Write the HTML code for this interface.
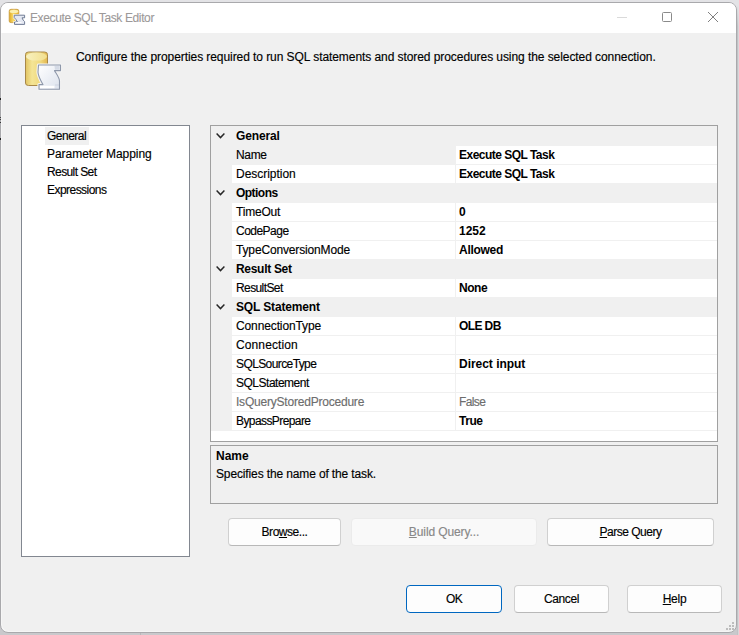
<!DOCTYPE html>
<html><head><meta charset="utf-8">
<style>
*{box-sizing:border-box;margin:0;padding:0}
html,body{width:739px;height:635px;overflow:hidden;background:#c9c9cc;font-family:"Liberation Sans",sans-serif;font-size:12px;color:#000;position:relative}
.abs{position:absolute}
#win{position:absolute;left:0;top:2px;width:737px;height:631px;border:1px solid #a9a9ac;border-radius:8px;background:#f0f0f0;box-shadow:inset 1px -1px 0 #f6f6f6}
#titlebar{position:absolute;left:1px;top:3px;width:735px;height:30px;background:#fff;border-radius:7px 7px 0 0}
.t{position:absolute;white-space:nowrap;line-height:18px;height:18px;-webkit-text-stroke:0.15px currentColor}
.b{font-weight:bold;-webkit-text-stroke:0}
#left{position:absolute;left:21px;top:125px;width:169px;height:432px;border:1px solid #828790;background:#fff}
#grid{position:absolute;left:210px;top:125px;width:508px;height:317px;border:1px solid #a0a0a0;background:#fff}
#desc{position:absolute;left:210px;top:445px;width:508px;height:59px;border:1px solid #a0a0a0;background:#f0f0f0}
.btn{position:absolute;-webkit-text-stroke:0.15px currentColor;white-space:nowrap;border:1px solid #d0d0d0;border-bottom-color:#b8b8b8;border-radius:4px;background:#fdfdfd;text-align:center;line-height:24px}
.btn span{position:relative;top:1px}
.dis{background:#f9f9f9;border-color:#ebebeb;color:#888}
.def{border:1px solid #0067c0}
u{text-decoration:underline}

</style></head><body>
<div class="abs" style="left:0;top:0;width:739px;height:635px;background:#e3e3e6"></div>
<div class="abs" style="left:737px;top:6px;width:1px;height:629px;background:linear-gradient(#e0e0e3,#c2c2c5 20px)"></div>
<div class="abs" style="left:738px;top:6px;width:1px;height:629px;background:linear-gradient(#e3e3e6,#d7d7da 20px)"></div>
<div class="abs" style="left:0;top:625px;width:737px;height:10px;background:#c9c9cc"></div>
<div class="abs" style="left:140px;top:632px;width:1px;height:3px;background:#b8b8bb"></div>
<div id="win"></div>
<div id="titlebar"></div>
<svg class="abs" style="left:20px;top:48px" width="46" height="46" viewBox="0 0 46 46">
<defs>
<linearGradient id="cyl" x1="0" y1="0" x2="1" y2="0"><stop offset="0" stop-color="#e2c462"/><stop offset="0.3" stop-color="#f4e596"/><stop offset="0.7" stop-color="#efd77a"/><stop offset="1" stop-color="#e3b64e"/></linearGradient>
<linearGradient id="ctop" x1="0" y1="0" x2="1" y2="0"><stop offset="0" stop-color="#f8f1bf"/><stop offset="1" stop-color="#f2df8e"/></linearGradient>
<linearGradient id="scr" x1="0" y1="0" x2="1" y2="1"><stop offset="0" stop-color="#ffffff"/><stop offset="1" stop-color="#dbe1ec"/></linearGradient>
</defs>
<path d="M5.5,6.5 Q5.5,4 8.5,4 L24.5,4 Q27.5,4 27.5,6.5 L27.5,35 Q27.5,37.5 24.5,37.5 L8.5,37.5 Q5.5,37.5 5.5,35 Z" fill="url(#cyl)" stroke="#a88848" stroke-width="1"/>
<ellipse cx="16.5" cy="8.6" rx="10.5" ry="4" fill="url(#ctop)"/>
<path d="M18.5,17 L40.5,17 L40.5,22.6 L34.5,22.6 C36.5,26 39.5,30 39.5,33 L39.5,41.2 L19,41.2 L19,36.6 L23,36.6 C21,33 18,28 18,24 Z" fill="none" stroke="#f4f4f4" stroke-width="3.2" stroke-linejoin="round"/>
<path d="M18.5,17 L40.5,17 L40.5,22.6 L34.5,22.6 C36.5,26 39.5,30 39.5,33 L39.5,41.2 L19,41.2 L19,36.6 L23,36.6 C21,33 18,28 18,24 Z" fill="url(#scr)" stroke="#8e98aa" stroke-width="1.1" stroke-linejoin="round"/>
<path d="M34.5,18 L39.5,18 L39.5,21.8 L35,21.8 Z" fill="#d5dbe6"/>
<path d="M20,37.8 L34.5,37.8 L34.5,40.2 L20,40.2 Z" fill="#ffffff"/>
<path d="M35,37 L39,37" stroke="#c0c8d6" stroke-width="0.6"/>
</svg>
<svg class="abs" style="left:8px;top:8px" width="18" height="18" viewBox="0 0 18 18">
<defs>
<linearGradient id="cyl2" x1="0" y1="0" x2="1" y2="0"><stop offset="0" stop-color="#e0a820"/><stop offset="0.4" stop-color="#f6d868"/><stop offset="1" stop-color="#e6b02c"/></linearGradient>
</defs>
<path d="M1.2,3 Q1.2,1.3 3,1.3 L9,1.3 Q10.8,1.3 10.8,3 L10.8,13 Q10.8,14.6 9,14.6 L3,14.6 Q1.2,14.6 1.2,13 Z" fill="url(#cyl2)" stroke="#c89a40" stroke-width="0.8"/>
<ellipse cx="6" cy="3.4" rx="4.3" ry="1.7" fill="#fbefb0"/>
<path d="M6.2,7.2 L16.6,7.2 L16.6,9.8 L14,9.8 Q15,12.5 16.6,13.6 L16.6,16.4 L6.5,16.4 L6.5,14 L9.4,14 Q8,11 6.2,9.6 Z" fill="none" stroke="#ffffff" stroke-width="2"/>
<path d="M6.2,7.2 L16.6,7.2 L16.6,9.8 L14,9.8 Q15,12.5 16.6,13.6 L16.6,16.4 L6.5,16.4 L6.5,14 L9.4,14 Q8,11 6.2,9.6 Z" fill="#e4e8f2" stroke="#707c94" stroke-width="1" stroke-linejoin="round"/>
<path d="M7.5,14.6 L13.5,14.6" stroke="#ffffff" stroke-width="1"/>
</svg>
<div class="abs" style="left:617px;top:17px;width:10px;height:1px;background:#dadada"></div>
<div class="abs" style="left:662px;top:12px;width:10px;height:10px;border:1px solid #8a8a8a;border-radius:1.5px"></div>
<svg class="abs" style="left:707px;top:11px" width="12" height="12" viewBox="0 0 12 12"><path d="M1,1 L11,11 M11,1 L1,11" stroke="#808080" stroke-width="1"/></svg>
<div class="t" style="left:30px;top:9px;letter-spacing:-0.38px;color:#9c9999;-webkit-text-stroke:0.1px #9c9999;">Execute SQL Task Editor</div>
<div class="t" style="left:76px;top:48px;letter-spacing:-0.07px;">Configure the properties required to run SQL statements and stored procedures using the selected connection.</div>
<div id="left"></div>
<div class="abs" style="left:45px;top:127px;width:44px;height:18px;background:#f0f0f0"></div>
<div class="t" style="left:47px;top:127px;letter-spacing:-0.5px;">General</div>
<div class="t" style="left:47px;top:145px;letter-spacing:-0.04px;">Parameter Mapping</div>
<div class="t" style="left:47px;top:163px;letter-spacing:-0.6px;">Result Set</div>
<div class="t" style="left:47px;top:181px;letter-spacing:-0.54px;">Expressions</div>
<div id="grid"></div>
<div class="abs" style="left:211px;top:126px;width:21px;height:305px;background:#f0f0f0"></div>
<div class="abs" style="left:211px;top:126px;width:506px;height:20px;background:#f0f0f0"></div>
<svg class="abs" style="left:216px;top:133px" width="9" height="6" viewBox="0 0 9 6"><polyline points="0.6,0.6 4.5,4.6 8.4,0.6" fill="none" stroke="#262626" stroke-width="1.45"/></svg>
<div class="t b" style="left:236px;top:127px;letter-spacing:-0.14px;">General</div>
<div class="abs" style="left:455px;top:145px;width:1px;height:20px;background:#f0f0f0"></div>
<div class="abs" style="left:232px;top:164px;width:485px;height:1px;background:#f0f0f0"></div>
<div class="abs" style="left:232px;top:146px;width:223px;height:18px;background:#f0f0f0"></div>
<div class="t" style="left:236px;top:146px;letter-spacing:-0.35px;">Name</div>
<div class="t b" style="left:459px;top:146px;letter-spacing:-0.52px;">Execute SQL Task</div>
<div class="abs" style="left:455px;top:164px;width:1px;height:20px;background:#f0f0f0"></div>
<div class="abs" style="left:232px;top:183px;width:485px;height:1px;background:#f0f0f0"></div>
<div class="t" style="left:236px;top:165px;letter-spacing:-0.03px;">Description</div>
<div class="t b" style="left:459px;top:165px;letter-spacing:-0.52px;">Execute SQL Task</div>
<div class="abs" style="left:211px;top:183px;width:506px;height:20px;background:#f0f0f0"></div>
<svg class="abs" style="left:216px;top:190px" width="9" height="6" viewBox="0 0 9 6"><polyline points="0.6,0.6 4.5,4.6 8.4,0.6" fill="none" stroke="#262626" stroke-width="1.45"/></svg>
<div class="t b" style="left:236px;top:184px;letter-spacing:-0.53px;">Options</div>
<div class="abs" style="left:455px;top:202px;width:1px;height:20px;background:#f0f0f0"></div>
<div class="abs" style="left:232px;top:221px;width:485px;height:1px;background:#f0f0f0"></div>
<div class="t" style="left:236px;top:203px;letter-spacing:-0.2px;">TimeOut</div>
<div class="t b" style="left:459px;top:203px;letter-spacing:0px;">0</div>
<div class="abs" style="left:455px;top:221px;width:1px;height:20px;background:#f0f0f0"></div>
<div class="abs" style="left:232px;top:240px;width:485px;height:1px;background:#f0f0f0"></div>
<div class="t" style="left:236px;top:222px;letter-spacing:-0.52px;">CodePage</div>
<div class="t b" style="left:459px;top:222px;letter-spacing:-0.01px;">1252</div>
<div class="abs" style="left:455px;top:240px;width:1px;height:20px;background:#f0f0f0"></div>
<div class="abs" style="left:232px;top:259px;width:485px;height:1px;background:#f0f0f0"></div>
<div class="t" style="left:236px;top:241px;letter-spacing:-0.15px;">TypeConversionMode</div>
<div class="t b" style="left:459px;top:241px;letter-spacing:-0.28px;">Allowed</div>
<div class="abs" style="left:211px;top:259px;width:506px;height:20px;background:#f0f0f0"></div>
<svg class="abs" style="left:216px;top:266px" width="9" height="6" viewBox="0 0 9 6"><polyline points="0.6,0.6 4.5,4.6 8.4,0.6" fill="none" stroke="#262626" stroke-width="1.45"/></svg>
<div class="t b" style="left:236px;top:260px;letter-spacing:-0.3px;">Result Set</div>
<div class="abs" style="left:455px;top:278px;width:1px;height:20px;background:#f0f0f0"></div>
<div class="abs" style="left:232px;top:297px;width:485px;height:1px;background:#f0f0f0"></div>
<div class="t" style="left:236px;top:279px;letter-spacing:-0.6px;">ResultSet</div>
<div class="t b" style="left:459px;top:279px;letter-spacing:-0.44px;">None</div>
<div class="abs" style="left:211px;top:297px;width:506px;height:20px;background:#f0f0f0"></div>
<svg class="abs" style="left:216px;top:304px" width="9" height="6" viewBox="0 0 9 6"><polyline points="0.6,0.6 4.5,4.6 8.4,0.6" fill="none" stroke="#262626" stroke-width="1.45"/></svg>
<div class="t b" style="left:236px;top:298px;letter-spacing:-0.15px;">SQL Statement</div>
<div class="abs" style="left:455px;top:316px;width:1px;height:20px;background:#f0f0f0"></div>
<div class="abs" style="left:232px;top:335px;width:485px;height:1px;background:#f0f0f0"></div>
<div class="t" style="left:236px;top:317px;letter-spacing:-0.12px;">ConnectionType</div>
<div class="t b" style="left:459px;top:317px;letter-spacing:-0.6px;">OLE DB</div>
<div class="abs" style="left:455px;top:335px;width:1px;height:20px;background:#f0f0f0"></div>
<div class="abs" style="left:232px;top:354px;width:485px;height:1px;background:#f0f0f0"></div>
<div class="t" style="left:236px;top:336px;letter-spacing:0.11px;">Connection</div>
<div class="abs" style="left:455px;top:354px;width:1px;height:20px;background:#f0f0f0"></div>
<div class="abs" style="left:232px;top:373px;width:485px;height:1px;background:#f0f0f0"></div>
<div class="t" style="left:236px;top:355px;letter-spacing:-0.6px;">SQLSourceType</div>
<div class="t b" style="left:459px;top:355px;letter-spacing:-0.03px;">Direct input</div>
<div class="abs" style="left:455px;top:373px;width:1px;height:20px;background:#f0f0f0"></div>
<div class="abs" style="left:232px;top:392px;width:485px;height:1px;background:#f0f0f0"></div>
<div class="t" style="left:236px;top:374px;letter-spacing:-0.49px;">SQLStatement</div>
<div class="abs" style="left:455px;top:392px;width:1px;height:20px;background:#f0f0f0"></div>
<div class="abs" style="left:232px;top:411px;width:485px;height:1px;background:#f0f0f0"></div>
<div class="t" style="left:236px;top:393px;letter-spacing:-0.21px;color:#6d6d6d;">IsQueryStoredProcedure</div>
<div class="t" style="left:459px;top:393px;letter-spacing:-0.6px;color:#6d6d6d;">False</div>
<div class="abs" style="left:455px;top:411px;width:1px;height:20px;background:#f0f0f0"></div>
<div class="abs" style="left:232px;top:430px;width:485px;height:1px;background:#f0f0f0"></div>
<div class="t" style="left:236px;top:412px;letter-spacing:-0.59px;">BypassPrepare</div>
<div class="t b" style="left:459px;top:412px;letter-spacing:-0.46px;">True</div>
<div id="desc"></div>
<div class="t b" style="left:216px;top:447px;letter-spacing:0px;">Name</div>
<div class="t" style="left:216px;top:465px;letter-spacing:-0.13px;">Specifies the name of the task.</div>
<div class="btn " style="left:228px;top:518px;width:113px;height:28px;letter-spacing:-0.46px;"><span>Bro<u>w</u>se...</span></div>
<div class="btn dis" style="left:351px;top:518px;width:186px;height:28px;letter-spacing:-0.11px;"><span><u>B</u>uild Query...</span></div>
<div class="btn " style="left:547px;top:518px;width:167px;height:28px;letter-spacing:-0.5px;"><span><u>P</u>arse Query</span></div>
<div class="btn def" style="left:406px;top:585px;width:96px;height:28px;letter-spacing:-0.6px;"><span>OK</span></div>
<div class="btn " style="left:514px;top:585px;width:95px;height:28px;letter-spacing:-0.42px;"><span>Cancel</span></div>
<div class="btn " style="left:627px;top:585px;width:95px;height:28px;letter-spacing:-0.27px;"><span><u>H</u>elp</span></div>
<div class="abs" style="left:732px;top:622px;width:2px;height:2px;background:#bdbdbd"></div>
<div class="abs" style="left:729px;top:625px;width:2px;height:2px;background:#bdbdbd"></div>
<div class="abs" style="left:732px;top:625px;width:2px;height:2px;background:#bdbdbd"></div>
<div class="abs" style="left:726px;top:628px;width:2px;height:2px;background:#bdbdbd"></div>
<div class="abs" style="left:729px;top:628px;width:2px;height:2px;background:#bdbdbd"></div>
<div class="abs" style="left:732px;top:628px;width:2px;height:2px;background:#bdbdbd"></div>
<!--marks--><div class="abs" style="left:0;top:98px;width:1px;height:2px;background:#222"></div>
<div class="abs" style="left:0;top:117px;width:1px;height:1px;background:#444"></div>
<div class="abs" style="left:0;top:119px;width:1px;height:1px;background:#444"></div>
<div class="abs" style="left:0;top:122px;width:1px;height:1px;background:#333"></div>
<div class="abs" style="left:0;top:138px;width:1px;height:2px;background:#222"></div>
</body></html>
